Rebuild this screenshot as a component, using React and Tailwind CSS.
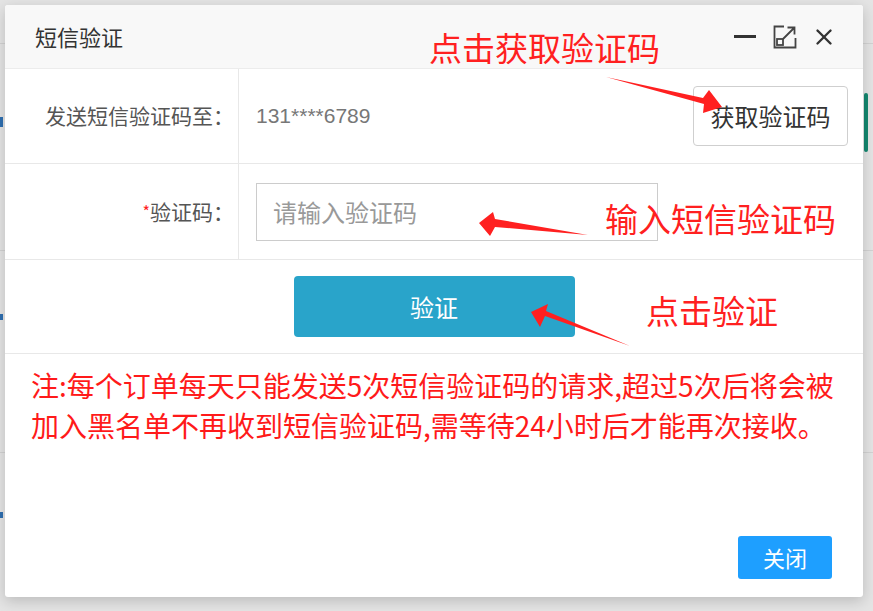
import { X } from 'lucide-react';

const cjk = { fontFamily: '"Noto Sans CJK SC", "Noto Sans", sans-serif' };

const MaxIcon = () => (
  <svg width="24" height="24" viewBox="0 0 24 24" fill="none" stroke="#444" strokeWidth="1.8">
    <path d="M11 1.5H1.5V22.5H22.5V13" />
    <rect x="4" y="14" width="6" height="6" />
    <path d="M10 14L21.5 2.5M14.5 2.5H21.5V9.5" />
  </svg>
);

const Arrows = () => (
  <svg className="absolute left-0 top-0 pointer-events-none" width="873" height="611" viewBox="0 0 873 611">
    {/* 点击获取验证码 */}
    <polygon fill="#ff2020" points="606,77 703,98 709,90 722,107 703,113 704,104" />
    {/* 输入短信验证码 */}
    <polygon fill="#ff2020" points="588,235 495,227 490,236 479,223 493,212 495,219" />
    {/* 点击验证 */}
    <polygon fill="#ff2020" points="630,346 545,316 540,327 531,312 548,304 546,311" />
  </svg>
);

const App = () => {
  return (
    <div className="relative w-[873px] h-[611px] overflow-hidden bg-[#e4e4e4] pt-[5px] pl-[5px]" style={cjk}>
      {/* page behind the shade */}
      <div className="absolute left-0 top-[43px] w-full h-px bg-[#d2d2d2]" />
      <div className="absolute left-0 top-[250px] w-full h-px bg-[#d2d2d2]" />
      <div className="absolute left-0 top-[452px] w-full h-px bg-[#d2d2d2]" />
      <div className="absolute left-0 top-[117px] w-[3px] h-[10px] bg-[#2f6fb0]" />
      <div className="absolute left-0 top-[314px] w-[3px] h-[6px] bg-[#2f6fb0]" />
      <div className="absolute left-0 top-[512px] w-[3px] h-[6px] bg-[#2f6fb0]" />
      <div className="absolute left-[864px] top-[93px] w-[4px] h-[59px] rounded-sm bg-[#13876f]" />

      {/* dialog */}
      <div className="relative w-[858px] h-[592px] bg-white rounded-[3px] shadow-[0_4px_14px_rgba(0,0,0,0.18)] flex flex-col">
        <div className="h-[64px] shrink-0 bg-[#f8f8f8] border-b border-[#ececec] rounded-t-[3px] flex items-center pl-[30px] pr-[26px]">
          <span className="text-[22px] text-[#333]">短信验证</span>
          <div className="ml-auto flex items-center">
            <span className="block w-[22px] h-[3px] bg-[#333] mr-[17px]" />
            <MaxIcon />
            <X size={26} strokeWidth={2.2} color="#333" className="ml-[14px]" />
          </div>
        </div>

        <div className="h-[95px] shrink-0 flex border-b border-[#e8e8e8]">
          <div className="w-[234px] shrink-0 border-r border-[#e8e8e8] flex items-center justify-end pr-[4px] text-[21px] text-[#555]">
            发送短信验证码至：
          </div>
          <div className="flex-1 flex items-center pl-[17px] pr-[15px]">
            <span className="text-[21px] text-[#777]" style={{ fontFamily: '"Liberation Sans", Arial, sans-serif' }}>
              131****6789
            </span>
            <button className="ml-auto w-[155px] h-[60px] border border-[#cfcfcf] rounded-[4px] bg-white text-[24px] text-[#333]">
              获取验证码
            </button>
          </div>
        </div>

        <div className="h-[96px] shrink-0 flex border-b border-[#e8e8e8]">
          <div className="w-[234px] shrink-0 border-r border-[#e8e8e8] flex items-center justify-end pr-[4px] text-[21px] text-[#555]">
            <span className="text-[#ff2020] text-[16px] self-start mt-[35px]">*</span>
            验证码：
          </div>
          <div className="flex-1 flex items-center pl-[17px]">
            <input
              type="text"
              placeholder="请输入验证码"
              className="w-[402px] h-[58px] border border-[#cccccc] px-[16px] text-[24px] text-[#333] placeholder:text-[#999] outline-none"
            />
          </div>
        </div>

        <div className="h-[94px] shrink-0 flex items-center justify-center border-b border-[#e8e8e8]">
          <button className="w-[281px] h-[61px] rounded-[4px] bg-[#29a4ca] text-white text-[24px]">验证</button>
        </div>

        <p className="pl-[26px] pt-[11px] w-[845px] text-[28px] leading-[40px] text-[#ff1a1a]">
          注:每个订单每天只能发送5次短信验证码的请求,超过5次后将会被加入黑名单不再收到短信验证码,需等待24小时后才能再次接收。
        </p>

        <div className="mt-auto flex justify-end pr-[31px] pb-[18px]">
          <button className="w-[94px] h-[43px] rounded-[3px] bg-[#1e9fff] text-white text-[22px]">关闭</button>
        </div>
      </div>

      {/* annotations */}
      <div className="absolute left-[429px] top-[31px] text-[33px] leading-none text-[#ff2020]">点击获取验证码</div>
      <div className="absolute left-[605px] top-[202px] text-[33px] leading-none text-[#ff2020]">输入短信验证码</div>
      <div className="absolute left-[646px] top-[294px] text-[33px] leading-none text-[#ff2020]">点击验证</div>
      <Arrows />
    </div>
  );
};

export default App;
